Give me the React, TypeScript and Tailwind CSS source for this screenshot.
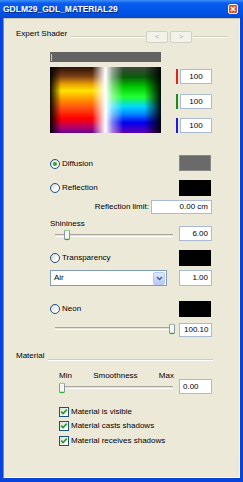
import React from "react";

function Radio({ checked = false }: { checked?: boolean }) {
  return (
    <span className="flex w-[10px] h-[10px] shrink-0 items-center justify-center rounded-full border border-[#1C5180] bg-[linear-gradient(135deg,#D6D5CC,#FFFFFF_70%)]">
      {checked ? <span className="block w-[4px] h-[4px] rounded-full bg-[#2FA52F]" /> : null}
    </span>
  );
}

function Check() {
  return (
    <span className="flex w-[10px] h-[10px] shrink-0 items-center justify-center border border-[#1C5180] bg-[linear-gradient(135deg,#DCDBD3,#FFFFFF_80%)]">
      <svg width="8" height="8" viewBox="0 0 8 8">
        <path d="M1.2 3.6 L3.1 5.6 L6.8 1.6" fill="none" stroke="#21A121" strokeWidth="1.7" />
      </svg>
    </span>
  );
}

function Thumb({ className }: { className: string }) {
  return (
    <span
      className={
        "absolute top-1/2 -translate-y-1/2 w-[6px] h-[11px] rounded-[2px] border border-[#8C97A3] border-t-[#3DB83D] border-b-2 border-b-[#2FAE2F] bg-[#F6F6F2] " +
        className
      }
    />
  );
}

function Track() {
  return <div className="w-full h-[3px] border-t border-t-[#A9A697] bg-[#E2E0D4] border-b border-b-white" />;
}

function Swatch({ className }: { className: string }) {
  return <div className={"w-[32px] h-[16px] mr-[1px] " + className} />;
}

function Spectrum() {
  return (
    <svg width="111" height="66" viewBox="0 0 111 66" className="block">
      <defs>
        <linearGradient id="lv" x1="0" y1="0" x2="0" y2="1">
          <stop offset="0" stopColor="#2a1206" />
          <stop offset="0.14" stopColor="#7a3e16" />
          <stop offset="0.26" stopColor="#e8a000" />
          <stop offset="0.36" stopColor="#ffe400" />
          <stop offset="0.5" stopColor="#ff9000" />
          <stop offset="0.62" stopColor="#ff5010" />
          <stop offset="0.78" stopColor="#ff0000" />
          <stop offset="0.92" stopColor="#b00070" />
          <stop offset="1" stopColor="#6a0090" />
        </linearGradient>
        <linearGradient id="rv" x1="0" y1="0" x2="0" y2="1">
          <stop offset="0" stopColor="#404640" />
          <stop offset="0.15" stopColor="#0a5a0a" />
          <stop offset="0.3" stopColor="#00c800" />
          <stop offset="0.45" stopColor="#20ff30" />
          <stop offset="0.6" stopColor="#00d8ff" />
          <stop offset="0.72" stopColor="#0080ff" />
          <stop offset="0.84" stopColor="#0000f0" />
          <stop offset="1" stopColor="#6000b0" />
        </linearGradient>
        <linearGradient id="hz" x1="0" y1="0" x2="1" y2="0">
          <stop offset="0" stopColor="#000" stopOpacity="0.95" />
          <stop offset="0.1" stopColor="#000" stopOpacity="0" />
          <stop offset="0.38" stopColor="#fff" stopOpacity="0" />
          <stop offset="0.5" stopColor="#fff" stopOpacity="1" />
          <stop offset="0.56" stopColor="#fff" stopOpacity="0.5" />
          <stop offset="0.66" stopColor="#fff" stopOpacity="0" />
          <stop offset="0.85" stopColor="#000" stopOpacity="0" />
          <stop offset="1" stopColor="#000" stopOpacity="0.95" />
        </linearGradient>
      </defs>
      <rect x="0" y="0" width="56" height="66" fill="url(#lv)" />
      <rect x="56" y="0" width="55" height="66" fill="url(#rv)" />
      <rect x="0" y="0" width="111" height="66" fill="url(#hz)" />
    </svg>
  );
}

export default function App() {
  return (
    <div className="w-[243px] h-[482px] bg-[#0843DC] flex flex-col font-['Liberation_Sans',Arial,sans-serif] text-[8px] leading-[10px] text-black">
      {/* Title bar */}
      <div className="h-[18px] flex items-center justify-between pl-[3px] pr-[5px] bg-[linear-gradient(to_bottom,#3D8EF8_0%,#0A5CF0_18%,#0055E6_60%,#0449D8_100%)]">
        <span className="text-white font-bold text-[8.5px] leading-[10px] [text-shadow:1px_1px_0_#0A2A80]">
          GDLM29_GDL_MATERIAL29
        </span>
        <span className="flex w-[10px] h-[10px] items-center justify-center rounded-[2px] border border-[#F4F4F4] bg-[#E2552D]">
          <svg width="6" height="6" viewBox="0 0 6 6">
            <path d="M1 1 L5 5 M5 1 L1 5" stroke="#fff" strokeWidth="1.4" />
          </svg>
        </span>
      </div>

      {/* Body */}
      <div className="flex-1 mx-[3px] mb-[4px] flex flex-col bg-[#ECE9D8] border border-t-[#C9C6B6] border-l-[#8E8B7C] border-r-[#F8F7F0] border-b-[#FBFAF4]">
        {/* Expert Shader header */}
        <div className="mt-[10px] flex items-start pl-[12px] pr-[11px]">
          <span>Expert Shader</span>
          <div className="flex-1 ml-[4px] mt-[7px] h-[2px] border-t border-t-[#D0CDBD] border-b border-b-white" />
          <div className="ml-[1px] mt-[2px] w-[22px] h-[12px] flex items-center justify-center rounded-[2px] border border-[#D3D0C2] bg-[#F3F2EB] text-[#B8B5A6]">
            &lt;
          </div>
          <div className="ml-[2px] mt-[2px] w-[22px] h-[12px] flex items-center justify-center rounded-[2px] border border-[#D3D0C2] bg-[#F3F2EB] text-[#B8B5A6]">
            &gt;
          </div>
          <div className="w-[35px] ml-[1px] mt-[7px] h-[2px] border-t border-t-[#D0CDBD] border-b border-b-white" />
        </div>

        {/* Gray preview bar */}
        <div className="mt-[9px] ml-[46px] w-[111px] h-[10px] bg-[#636363] flex items-center pl-[1px]">
          <div className="w-[1px] h-[7px] bg-[#C8C8C8]" />
        </div>

        {/* Spectrum + RGB */}
        <div className="mt-[5px] ml-[46px] flex">
          <Spectrum />
          <div className="ml-[15px] flex flex-col">
            <div className="mt-[2px] flex items-center">
              <div className="w-[2px] h-[15px] bg-[#E8201A]" />
              <div className="ml-[2px] w-[32px] h-[15px] border border-[#A9BCD3] bg-white flex items-center justify-center">100</div>
            </div>
            <div className="mt-[10px] flex items-center">
              <div className="w-[2px] h-[15px] bg-[#1E8A1E]" />
              <div className="ml-[2px] w-[32px] h-[15px] border border-[#A9BCD3] bg-white flex items-center justify-center">100</div>
            </div>
            <div className="mt-[9px] flex items-center">
              <div className="w-[2px] h-[15px] bg-[#1A1AE0]" />
              <div className="ml-[2px] w-[32px] h-[15px] border border-[#A9BCD3] bg-white flex items-center justify-center">100</div>
            </div>
          </div>
        </div>

        {/* Diffusion */}
        <div className="mt-[22px] pl-[46px] pr-[27px] h-[16px] flex items-center justify-between">
          <div className="flex items-center gap-[2px] mt-[2px]">
            <Radio checked />
            <span>Diffusion</span>
          </div>
          <Swatch className="bg-[#6A6A6A] border border-[#8A8A8A]" />
        </div>

        {/* Reflection */}
        <div className="mt-[9px] pl-[46px] pr-[27px] h-[16px] flex items-center justify-between">
          <div className="flex items-center gap-[2px]">
            <Radio />
            <span>Reflection</span>
          </div>
          <Swatch className="bg-black" />
        </div>

        {/* Reflection limit */}
        <div className="mt-[4px] pr-[27px] flex items-center justify-end">
          <span className="mr-[2px]">Reflection limit:</span>
          <div className="w-[61px] h-[14px] border border-[#A9BCD3] bg-white flex items-center justify-end pr-[3px]">0.00 cm</div>
        </div>

        {/* Shininess */}
        <div className="mt-[5px] pl-[46px] pr-[27px] flex items-end justify-between">
          <div className="w-[124px] flex flex-col">
            <span className="h-[10px]">Shininess</span>
            <div className="relative h-[12px] flex items-center pl-[5px] pr-[1px]">
              <Track />
              <Thumb className="left-[14px]" />
            </div>
          </div>
          <div className="w-[33px] h-[15px] border border-[#A9BCD3] bg-white flex items-center justify-end pr-[3px]">6.00</div>
        </div>

        {/* Transparency */}
        <div className="mt-[9px] pl-[46px] pr-[27px] h-[16px] flex items-center justify-between">
          <div className="flex items-center gap-[2px]">
            <Radio />
            <span>Transparency</span>
          </div>
          <Swatch className="bg-black" />
        </div>

        {/* Dropdown */}
        <div className="mt-[4px] pl-[46px] pr-[27px] flex items-center justify-between">
          <div className="w-[117px] h-[16px] border border-[#7F9DB9] bg-white flex items-center pl-[3px] pr-[1px]">
            <span className="flex-1">Air</span>
            <span className="flex w-[12px] h-[13px] items-center justify-center rounded-[2px] border border-[#B7CAF3] bg-[linear-gradient(to_bottom,#E0E9FE,#B4CAF7)]">
              <svg width="7" height="5" viewBox="0 0 7 5">
                <path d="M1 1 L3.5 3.5 L6 1" fill="none" stroke="#4D6185" strokeWidth="1.5" />
              </svg>
            </span>
          </div>
          <div className="w-[33px] h-[16px] border border-[#A9BCD3] bg-white flex items-center justify-end pr-[3px]">1.00</div>
        </div>

        {/* Neon */}
        <div className="mt-[15px] pl-[46px] pr-[27px] h-[16px] flex items-center justify-between">
          <div className="flex items-center gap-[2px]">
            <Radio />
            <span>Neon</span>
          </div>
          <Swatch className="bg-black" />
        </div>

        {/* Neon slider */}
        <div className="mt-[6px] pl-[46px] pr-[27px] flex items-center justify-between">
          <div className="relative w-[124px] h-[14px] flex items-center pl-[5px] pr-[3px] pb-[3px]">
            <Track />
            <Thumb className="left-[119px] mt-[-1px]" />
          </div>
          <div className="w-[33px] h-[14px] border border-[#A9BCD3] bg-white flex items-center pl-[4px]">100.10</div>
        </div>

        {/* Material header */}
        <div className="mt-[14px] flex items-start pl-[12px] pr-[26px]">
          <span>Material</span>
          <div className="flex-1 ml-[4px] mt-[8px] h-[2px] border-t border-t-[#D0CDBD] border-b border-b-white" />
        </div>

        {/* Smoothness */}
        <div className="mt-[10px] pl-[46px] pr-[27px] flex items-end justify-between">
          <div className="w-[124px] flex flex-col">
            <div className="h-[10px] flex justify-between pl-[9px]">
              <span>Min</span>
              <span>Smoothness</span>
              <span>Max</span>
            </div>
            <div className="relative h-[13px] flex items-center pl-[10px] pr-[1px]">
              <Track />
              <Thumb className="left-[9px]" />
            </div>
          </div>
          <div className="w-[33px] h-[15px] border border-[#A9BCD3] bg-white flex items-center pl-[3px]">0.00</div>
        </div>

        {/* Checkboxes */}
        <div className="mt-[13px] pl-[55px] flex flex-col">
          <div className="h-[10px] flex items-center gap-[2px]">
            <Check />
            <span>Material is visible</span>
          </div>
          <div className="mt-[4px] h-[10px] flex items-center gap-[2px]">
            <Check />
            <span>Material casts shadows</span>
          </div>
          <div className="mt-[5px] h-[10px] flex items-center gap-[2px]">
            <Check />
            <span>Material receives shadows</span>
          </div>
        </div>
      </div>
    </div>
  );
}
